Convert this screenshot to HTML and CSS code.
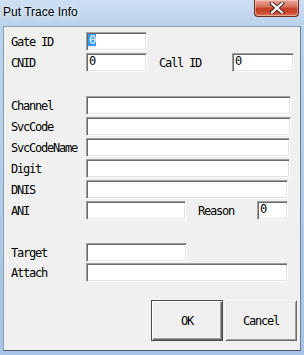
FILE: index.html
```html
<!DOCTYPE html>
<html lang="en">
<head>
  <meta charset="UTF-8">
  <title>Put Trace Info</title>
  <link rel="stylesheet" href="styles.css">
</head>
<body>
  <div class="window">
    <div class="titlebar">
      <span class="title">Put Trace Info</span>
      <div class="close">
        <svg width="16" height="12" viewBox="0 0 16 12">
          <path d="M3 1.5 L13 10.5 M13 1.5 L3 10.5" stroke="#4a2a26" stroke-width="4.2" stroke-linecap="square" fill="none"/>
          <path d="M3 1.5 L13 10.5 M13 1.5 L3 10.5" stroke="#fff" stroke-width="2.2" stroke-linecap="square" fill="none"/>
        </svg>
      </div>
    </div>

    <div class="client">
      <div class="group group-ids">
        <div class="row">
          <span class="label">Gate ID</span>
          <div class="field w-id"><span class="sel">0</span></div>
        </div>
        <div class="row">
          <span class="label">CNID</span>
          <div class="field w-id">0</div>
          <span class="label side callid">Call ID</span>
          <div class="field w-call">0</div>
        </div>
      </div>

      <div class="group group-info">
        <div class="row">
          <span class="label">Channel</span>
          <div class="field w-205"></div>
        </div>
        <div class="row">
          <span class="label">SvcCode</span>
          <div class="field w-205"></div>
        </div>
        <div class="row">
          <span class="label">SvcCodeName</span>
          <div class="field w-204"></div>
        </div>
        <div class="row">
          <span class="label">Digit</span>
          <div class="field w-204"></div>
        </div>
        <div class="row">
          <span class="label">DNIS</span>
          <div class="field w-202"></div>
        </div>
        <div class="row">
          <span class="label">ANI</span>
          <div class="field w-ani"></div>
          <span class="label side reason">Reason</span>
          <div class="field w-reason">0</div>
        </div>
      </div>

      <div class="group group-target">
        <div class="row">
          <span class="label">Target</span>
          <div class="field w-target"></div>
        </div>
        <div class="row">
          <span class="label">Attach</span>
          <div class="field w-202"></div>
        </div>
      </div>

      <div class="buttons">
        <div class="btn default">OK</div>
        <div class="btn">Cancel</div>
      </div>
    </div>
  </div>
</body>
</html>
```

FILE: styles.css
```css
body {
  margin: 0;
  width: 304px;
  height: 355px;
  overflow: hidden;
}
.window {
  width: 304px;
  height: 355px;
  background: linear-gradient(to bottom, #cddff2 0, #bcd3ec 24px, #b0cbe9 60%, #a6c4e7 100%);
  box-sizing: border-box;
}
.titlebar {
  height: 26px;
  display: flex;
  justify-content: space-between;
  align-items: flex-start;
}
.title {
  font-family: "Liberation Sans", Arial, sans-serif;
  font-size: 12px;
  color: #000;
  margin: 5px 0 0 3px;
  text-shadow: 0 0 6px #e8f1fb, 0 0 3px #e8f1fb;
}
.close {
  width: 45px;
  height: 17px;
  margin-right: 5px;
  border: 1px solid #6c2b21;
  border-top: none;
  border-radius: 0 0 4px 4px;
  background: linear-gradient(to bottom, #e9a999 0, #d8745f 40%, #c23d25 55%, #cc4a30 80%, #e07a5c 100%);
  box-shadow: inset 0 0 0 1px rgba(255, 220, 210, 0.5);
  display: flex;
  align-items: center;
  justify-content: center;
  box-sizing: border-box;
}
.client {
  margin-left: 3px;
  width: 298px;
  height: 325px;
  box-sizing: border-box;
  background: #f0f0f0;
  border: 1px solid;
  border-color: #8d9db0 #6f7d8c #4f5b68 #8d9db0;
  padding: 5px 0 0 7px;
  font-family: "DejaVu Sans Mono", "Liberation Mono", monospace;
  font-size: 12px;
  letter-spacing: -1.22px;
  color: #000;
}
.group {
  display: flex;
  flex-direction: column;
  gap: 2px;
}
.group-info {
  margin-top: 24px;
}
.group-target {
  margin-top: 23px;
  gap: 1px;
}
.row {
  display: flex;
  align-items: center;
  height: 19px;
}
.label {
  width: 75px;
  flex: none;
  white-space: nowrap;
}
.side {
  margin-left: 12px;
}
.callid {
  width: 73px;
}
.reason {
  width: 59px;
}
.field {
  height: 19px;
  box-sizing: border-box;
  background: #fff;
  border: 1px solid;
  border-color: #a0a0a0 #fff #fff #a0a0a0;
  box-shadow: inset 1px 1px 0 #696969, inset -1px -1px 0 #e3e3e3;
  padding: 1px 1px 0 2px;
  line-height: 12px;
  flex: none;
}
.sel {
  display: inline-block;
  margin-left: -1px;
  padding: 0 1px;
  height: 12px;
  background: #3399ff;
  color: #fff;
}
.w-id { width: 61px; }
.w-call { width: 62px; }
.w-205 { width: 205px; }
.w-204 { width: 204px; }
.w-202 { width: 202px; }
.w-ani { width: 100px; }
.w-reason { width: 31px; }
.w-target { width: 101px; }
.buttons {
  display: flex;
  justify-content: flex-end;
  gap: 2px;
  margin-top: 18px;
  padding-right: 3px;
}
.btn {
  width: 72px;
  height: 41px;
  box-sizing: border-box;
  display: flex;
  align-items: center;
  justify-content: center;
  background: #f0f0f0;
  border: 1px solid;
  border-color: #fff #696969 #696969 #fff;
  box-shadow: inset 1px 1px 0 #e3e3e3, inset -1px -1px 0 #a0a0a0;
}
.btn.default {
  border-color: #4c4c4c;
  box-shadow: inset 1px 1px 0 #fff, inset -1px -1px 0 #696969, inset -2px -2px 0 #a0a0a0;
}
```
